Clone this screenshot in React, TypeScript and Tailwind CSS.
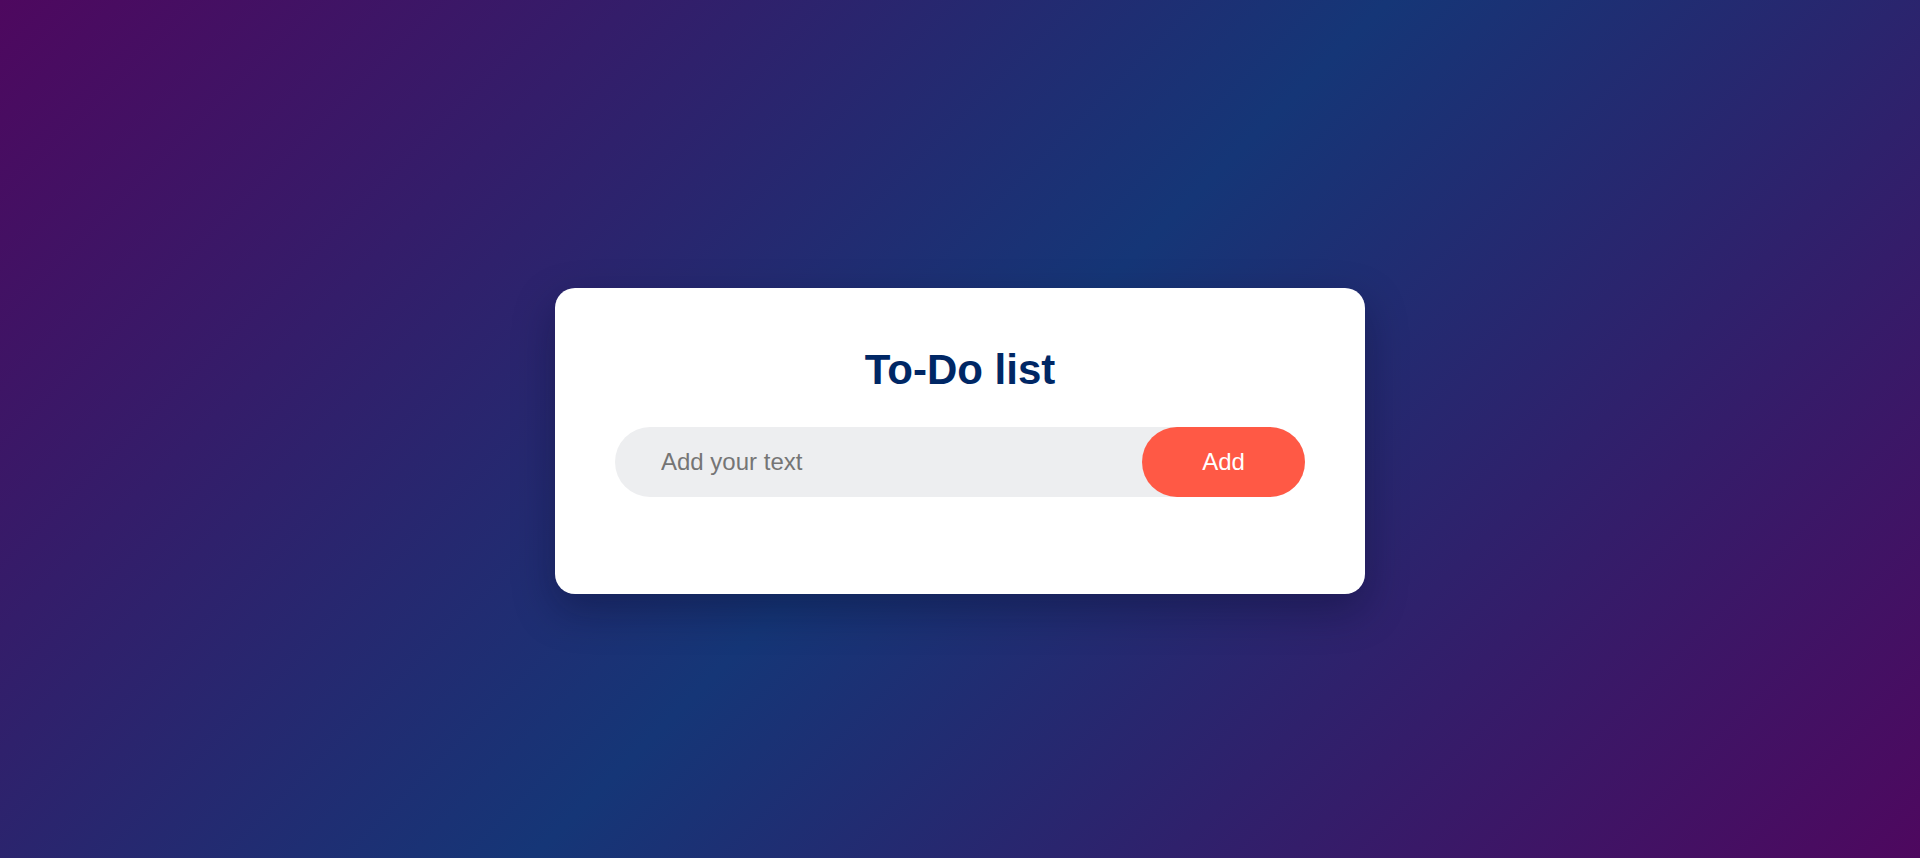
import { useState } from "react";

export default function App() {
  const [text, setText] = useState("");
  const [items, setItems] = useState<string[]>([]);

  const addItem = () => {
    if (!text.trim()) return;
    setItems([...items, text.trim()]);
    setText("");
  };

  return (
    <div
      className="min-h-screen w-full flex items-center justify-center pt-[23px] bg-[linear-gradient(135deg,#4e085f,#153677_50%,#4e085f)]"
      style={{ fontFamily: '"Liberation Sans", Arial, sans-serif' }}
    >
      <div className="w-[810px] bg-white rounded-[20px] pt-[58px] px-[60px] pb-[97px] shadow-[0_16px_40px_rgba(10,10,40,0.35)]">
        <h2 className="text-center text-[42px] leading-[48px] font-bold text-[#002765] mb-[33px]">
          To-Do list
        </h2>
        <div className="flex items-center h-[70px] rounded-full bg-[#edeef0]">
          <input
            type="text"
            value={text}
            onChange={(e) => setText(e.target.value)}
            placeholder="Add your text"
            className="flex-1 min-w-0 h-full bg-transparent outline-none border-none pl-[46px] pr-4 text-[24px] text-[#222] placeholder:text-[#757575]"
          />
          <button
            onClick={addItem}
            className="h-[70px] w-[163px] rounded-full bg-[#ff5945] text-white text-[24px] cursor-pointer"
          >
            Add
          </button>
        </div>
        {items.length > 0 && (
          <ul className="mt-6 space-y-3 text-[20px] text-[#555]">
            {items.map((item, i) => (
              <li key={i} className="pl-[46px]">
                {item}
              </li>
            ))}
          </ul>
        )}
      </div>
    </div>
  );
}
